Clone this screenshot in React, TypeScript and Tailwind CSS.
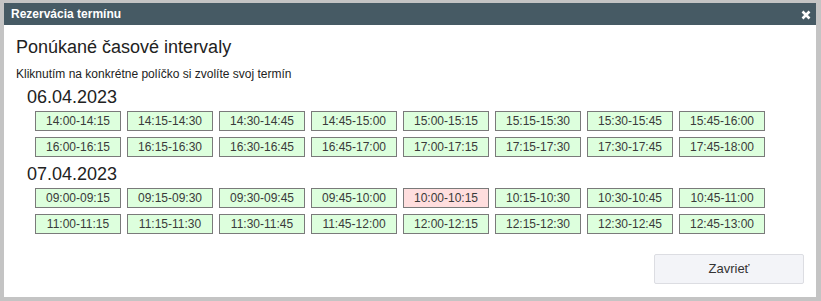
import React from "react";

const day1 = [
  "14:00-14:15","14:15-14:30","14:30-14:45","14:45-15:00","15:00-15:15","15:15-15:30","15:30-15:45","15:45-16:00",
  "16:00-16:15","16:15-16:30","16:30-16:45","16:45-17:00","17:00-17:15","17:15-17:30","17:30-17:45","17:45-18:00",
];
const day2 = [
  "09:00-09:15","09:15-09:30","09:30-09:45","09:45-10:00","10:00-10:15","10:15-10:30","10:30-10:45","10:45-11:00",
  "11:00-11:15","11:15-11:30","11:30-11:45","11:45-12:00","12:00-12:15","12:15-12:30","12:30-12:45","12:45-13:00",
];

function Slot({ label, taken }: { label: string; taken?: boolean }) {
  return (
    <div
      className={
        (taken ? "bg-[#ffdede] " : "bg-[#ddffdd] ") +
        "w-[86px] h-[20px] border border-[#7a7a7a] flex items-center justify-center text-[12px] text-[#3a3a3a] leading-none"
      }
    >
      {label}
    </div>
  );
}

function Day({ date, slots }: { date: string; slots: string[] }) {
  return (
    <div>
      <div className="pl-[11px] text-[18px] leading-[22px] text-[#222]">{date}</div>
      <div className="pl-[19px] pt-[3px] flex flex-wrap w-[760px] gap-x-[6px] gap-y-[6px]">
        {slots.map((s) => (
          <Slot key={s} label={s} taken={s === "10:00-10:15"} />
        ))}
      </div>
    </div>
  );
}

export default function App() {
  return (
    <div
      className="w-[821px] h-[301px] bg-[#c4c4c4] pt-[3px] pl-[4px] pr-[5px] pb-[4px]"
      style={{ fontFamily: '"Liberation Sans", Arial, sans-serif' }}
    >
      <div className="bg-white h-full flex flex-col">
        <div className="h-[22px] bg-[#465a64] pl-[7px] pr-[5px] flex items-center justify-between text-white font-bold text-[12px]">
          <span>Rezervácia termínu</span>
          <svg width="10" height="10" viewBox="0 0 10 10" className="mt-[1px]">
            <path d="M1.5 1.5 L8.5 8.5 M8.5 1.5 L1.5 8.5" stroke="#fff" strokeWidth="2.6" strokeLinecap="butt" />
          </svg>
        </div>
        <div className="px-[12px] pt-[10px] flex flex-col flex-1">
          <div className="text-[18px] leading-[24px] text-[#222]">Ponúkané časové intervaly</div>
          <div className="text-[12px] leading-[16px] text-[#222] mt-[7px]">
            Kliknutím na konkrétne políčko si zvolíte svoj termín
          </div>
          <div className="mt-[4px] flex flex-col gap-[6px]">
            <Day date="06.04.2023" slots={day1} />
            <Day date="07.04.2023" slots={day2} />
          </div>
          <div className="mt-auto mb-[13px] flex justify-end">
            <button className="w-[150px] h-[30px] bg-[#f3f4f8] border border-[#dcdde2] rounded-[2px] text-[13px] text-[#333]">
              Zavrieť
            </button>
          </div>
        </div>
      </div>
    </div>
  );
}
